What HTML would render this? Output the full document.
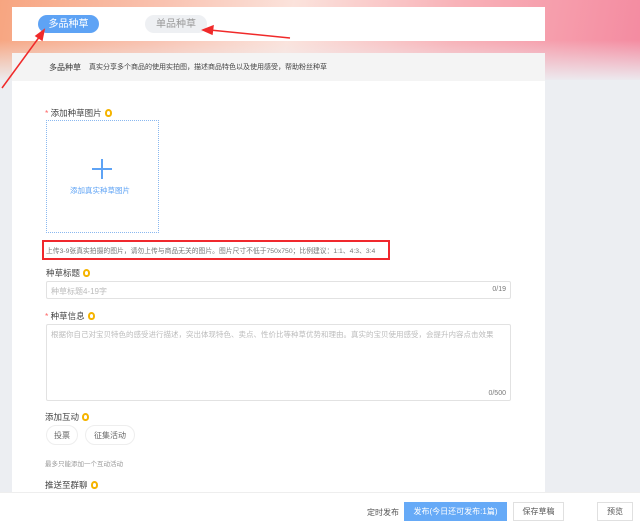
<!DOCTYPE html>
<html><head><meta charset="utf-8"><style>
*{margin:0;padding:0;box-sizing:border-box}
body{width:640px;height:528px;position:relative;overflow:hidden;font-family:"Liberation Sans","Noto Sans CJK SC",sans-serif;background:#eceef2;font-size:8px;color:#333}
.bg{position:absolute;left:0;top:0;width:640px;height:80px;background:linear-gradient(100deg,#f7a580 0%,#f9c2b0 25%,#fbe3dc 45%,#f8b2b8 70%,#f48aa0 100%)}
.bg2{position:absolute;left:0;top:40px;width:640px;height:42px;background:linear-gradient(#eceef200,#eceef2)}
.abs{position:absolute}
.card{position:absolute;left:12px;top:7px;width:533px;height:34px;background:#fff}
.main{position:absolute;left:12px;top:53px;width:533px;height:460px;background:#fff}
.hd{position:absolute;left:0;top:0;width:533px;height:28px;background:#f4f4f4}
.bulb{display:inline-block;width:7px;height:8px;border:2px solid #f5b400;border-radius:50% 50% 45% 45%;vertical-align:-1px;margin-left:3px}
.lbl{position:absolute;font-size:8.5px;color:#444}
.star{color:#f66}
.inp{position:absolute;border:1px solid #e2e2e2;border-radius:2px;background:#fff}
.ph{position:absolute;color:#bbb;font-size:8px}
.pill{position:absolute;border:1px solid #eee;border-radius:12px;font-size:8px;color:#666;text-align:center;line-height:19px;height:20px}
.foot{position:absolute;left:0;top:492px;width:640px;height:36px;background:#fff;border-top:1px solid #eee}
.btn{position:absolute;height:19px;line-height:17px;text-align:center;font-size:8px;border:1px solid #e0e0e0;background:#fff;color:#555}
</style></head><body>
<div class="bg"></div><div class="bg2"></div>
<div class="card">
 <div class="abs" style="left:26px;top:8px;width:61px;height:18px;border-radius:9px;background:#5ea3f5;color:#fff;font-size:10px;text-align:center;line-height:19px">多品种草</div>
 <div class="abs" style="left:133px;top:8px;width:62px;height:18px;border-radius:9px;background:#eef0f3;color:#999;font-size:10px;text-align:center;line-height:19px">单品种草</div>
</div>
<div class="main">
 <div class="hd"><span class="abs" style="left:37px;top:9px;font-size:8px;color:#333">多品种草</span><span class="abs" style="left:77px;top:9px;font-size:7px;color:#444">真实分享多个商品的使用实拍图，描述商品特色以及使用感受，帮助粉丝种草</span></div>
 <div class="lbl" style="left:33px;top:54px"><span class="star">*</span> 添加种草图片<span class="bulb"></span></div>
 <div class="abs" style="left:34px;top:67px;width:113px;height:113px;border:1px dotted #8ab8f0"></div>
 <div class="abs" style="left:80px;top:115px;width:20px;height:2px;background:#5ea3f5"></div>
 <div class="abs" style="left:89px;top:106px;width:2px;height:20px;background:#5ea3f5"></div>
 <div class="abs" style="left:58px;top:132px;font-size:7.5px;color:#5ea3f5">添加真实种草图片</div>
 <div class="abs" style="left:34px;top:192px;font-size:6.8px;color:#777">上传3-9张真实拍摄的图片，请勿上传与商品无关的图片。图片尺寸不低于750x750；比例建议：1:1、4:3、3:4</div>
 <div class="lbl" style="left:34px;top:214px">种草标题<span class="bulb"></span></div>
 <div class="inp" style="left:34px;top:228px;width:465px;height:18px"><span class="ph" style="left:4px;top:4px">种草标题4-19字</span><span class="abs" style="right:4px;top:4px;color:#777;font-size:7px">0/19</span></div>
 <div class="lbl" style="left:33px;top:257px"><span class="star">*</span> 种草信息<span class="bulb"></span></div>
 <div class="inp" style="left:34px;top:271px;width:465px;height:77px"><span class="ph" style="left:4px;top:4px;width:455px;font-size:7.5px;line-height:11px">根据你自己对宝贝特色的感受进行描述，突出体现特色、卖点、性价比等种草优势和理由。真实的宝贝使用感受，会提升内容点击效果</span><span class="abs" style="right:4px;bottom:3px;color:#777;font-size:7px">0/500</span></div>
 <div class="lbl" style="left:33px;top:358px">添加互动<span class="bulb"></span></div>
 <div class="pill" style="left:34px;top:372px;width:32px">投票</div>
 <div class="pill" style="left:73px;top:372px;width:50px">征集活动</div>
 <div class="abs" style="left:33px;top:405px;font-size:6.5px;color:#999">最多只能添加一个互动活动</div>
 <div class="lbl" style="left:33px;top:426px">推送至群聊<span class="bulb"></span></div>
</div>
<div class="foot">
 <span class="abs" style="left:367px;top:14px;font-size:8px;color:#555">定时发布</span>
 <div class="btn" style="left:404px;top:9px;width:103px;background:#66aaf7;border-color:#66aaf7;color:#fff">发布(今日还可发布:1篇)</div>
 <div class="btn" style="left:513px;top:9px;width:51px">保存草稿</div>
 <div class="btn" style="left:597px;top:9px;width:36px">预览</div>
</div>
<div class="abs" style="left:42px;top:240px;width:348px;height:20px;border:2.5px solid #f0282d"></div>
<svg class="abs" style="left:0;top:0" width="640" height="528"><g stroke="#f02a2a" stroke-width="1.5" fill="#f02a2a">
<line x1="2" y1="88" x2="40" y2="36"/><polygon points="44,30 36,36 42,40"/>
<line x1="290" y1="38" x2="210" y2="30"/><polygon points="203,30 213,26 212,34"/></g></svg>
</body></html>
